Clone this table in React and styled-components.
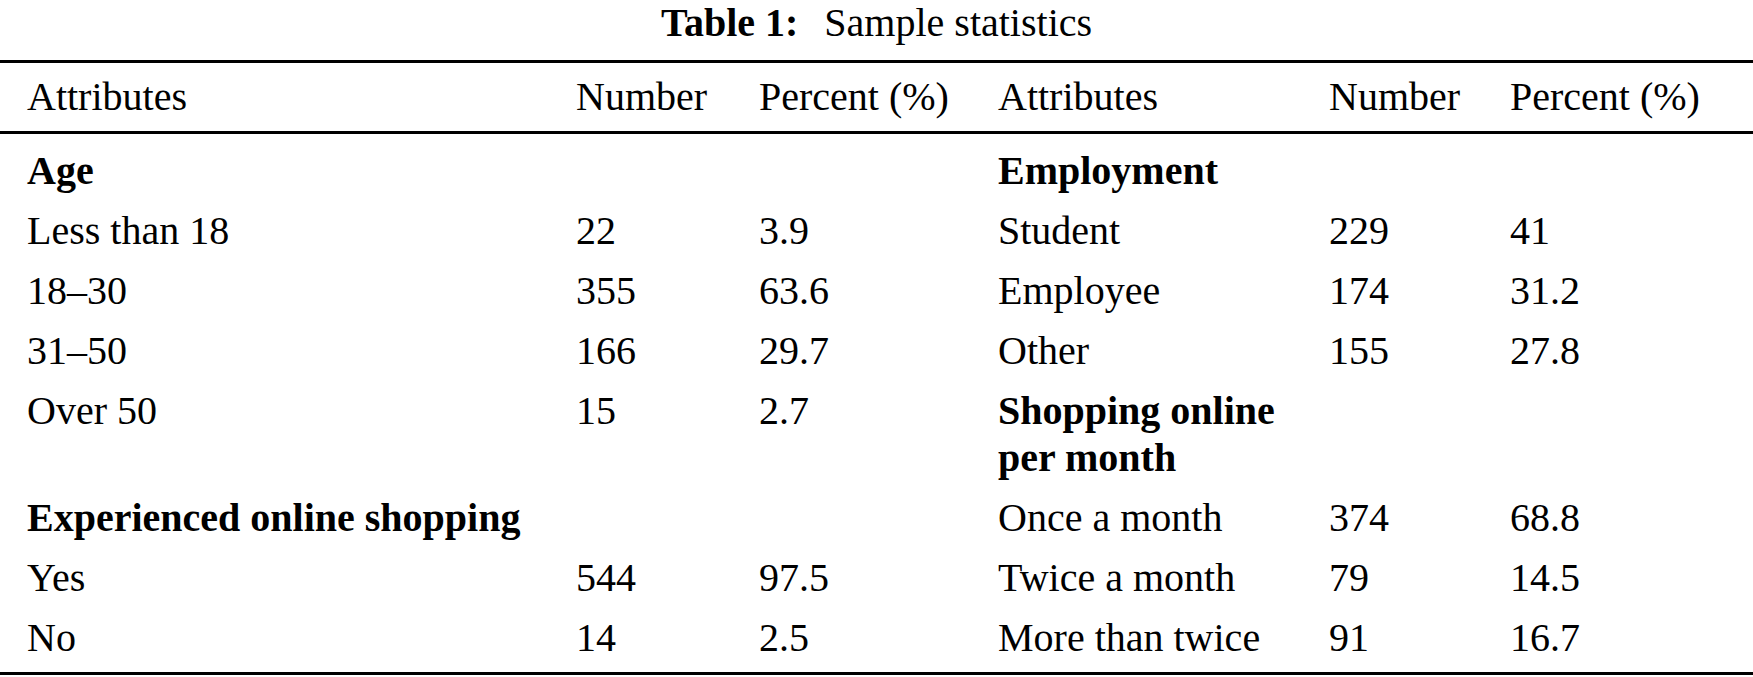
import styled, { createGlobalStyle } from 'styled-components';

const GlobalStyle = createGlobalStyle`
  html, body {
    margin: 0;
    padding: 0;
    background: #fff;
  }
  body {
    font-family: "Liberation Serif", "Times New Roman", serif;
    color: #000;
  }
`;

const COLUMNS = '549px 183px 239px 331px 181px 1fr';

const rows = [
  [{ t: 'Age', b: true }, '', '', { t: 'Employment', b: true }, '', ''],
  ['Less than 18', '22', '3.9', 'Student', '229', '41'],
  ['18–30', '355', '63.6', 'Employee', '174', '31.2'],
  ['31–50', '166', '29.7', 'Other', '155', '27.8'],
  ['Over 50', '15', '2.7', { t: ['Shopping online', 'per month'], b: true }, '', ''],
  [{ t: 'Experienced online shopping', b: true }, '', '', 'Once a month', '374', '68.8'],
  ['Yes', '544', '97.5', 'Twice a month', '79', '14.5'],
  ['No', '14', '2.5', 'More than twice', '91', '16.7'],
];

const headers = ['Attributes', 'Number', 'Percent (%)', 'Attributes', 'Number', 'Percent (%)'];

export default function App() {
  return (
    <>
      <GlobalStyle />
      <Page>
        <Caption>
          <strong>Table 1:</strong>
          <span>Sample statistics</span>
        </Caption>
        <Table>
          <HeadRow>
            {headers.map((h, i) => (
              <Cell key={i}>{h}</Cell>
            ))}
          </HeadRow>
          <Body>
            {rows.map((row, r) => (
              <Row key={r}>
                {row.map((c, i) => {
                  const cell = typeof c === 'string' ? { t: c } : c;
                  const lines = Array.isArray(cell.t) ? cell.t : [cell.t];
                  return (
                    <Cell key={i} $bold={cell.b}>
                      {lines.map((l, k) => (
                        <Line key={k}>{l}</Line>
                      ))}
                    </Cell>
                  );
                })}
              </Row>
            ))}
          </Body>
        </Table>
      </Page>
    </>
  );
}

const Page = styled.div`
  width: 1753px;
  height: 677px;
  overflow: hidden;
`;

const Caption = styled.div`
  display: flex;
  justify-content: center;
  gap: 26px;
  font-size: 40px;
  line-height: 45px;
  height: 45px;
  margin-bottom: 15px;

  strong {
    font-weight: 700;
  }
`;

const Table = styled.div`
  border-top: 3px solid #000;
  border-bottom: 3px solid #000;
  font-size: 40px;
`;

const HeadRow = styled.div`
  display: grid;
  grid-template-columns: ${COLUMNS};
  padding-left: 27px;
  height: 68px;
  align-items: center;
  line-height: 47px;
  border-bottom: 3px solid #000;
`;

const Body = styled.div`
  padding: 7px 0 4px;
`;

const Row = styled.div`
  display: grid;
  grid-template-columns: ${COLUMNS};
  padding-left: 27px;
  align-items: start;
`;

const Cell = styled.div`
  font-weight: ${(p) => (p.$bold ? 700 : 400)};
  white-space: nowrap;
  padding: 6px 0 7px;
  line-height: 47px;
`;

const Line = styled.div`
  height: 47px;
`;
